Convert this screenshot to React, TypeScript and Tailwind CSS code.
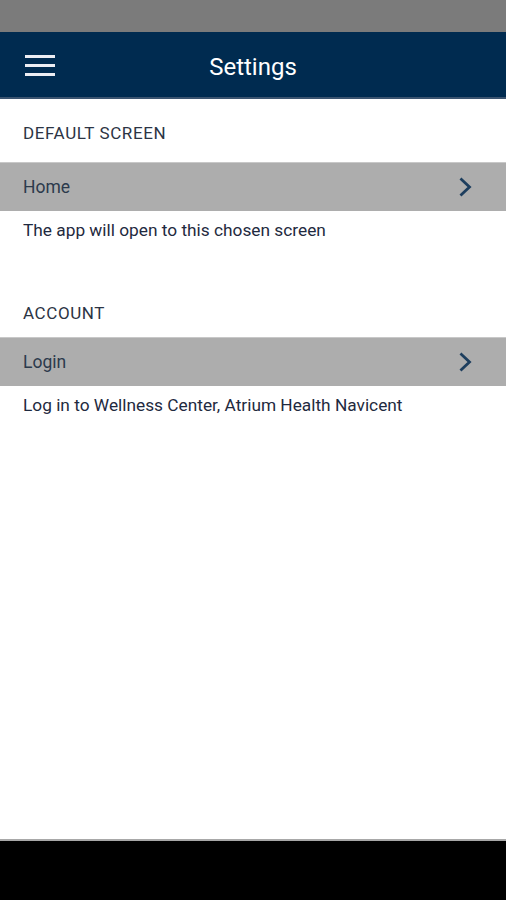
import React from "react";

function Chevron() {
  return (
    <svg width="16" height="20" viewBox="0 0 16 20" fill="none">
      <path d="M3.5 2.5 L11.5 10 L3.5 17.5" stroke="#1d3e5e" strokeWidth="2.8" strokeLinecap="square" />
    </svg>
  );
}

function Row({ label }: { label: string }) {
  return (
    <div className="h-[49px] bg-[#adadad] border-t border-[#c8c8c8] flex items-center justify-between pl-[23px] pr-[32px]">
      <span className="text-[17.5px] text-[#2c3a4c] leading-[20px]">{label}</span>
      <Chevron />
    </div>
  );
}

export default function App() {
  return (
    <div className="w-[506px] h-[900px] flex flex-col bg-white" style={{ fontFamily: "Roboto, 'Noto Sans', sans-serif" }}>
      <div className="h-[32px] bg-[#7b7b7b] shrink-0" />
      <div className="h-[67px] bg-[#002b50] border-b-2 border-[#3b5470] shrink-0 flex items-center relative">
        <div className="absolute left-[25px] top-[23px] flex flex-col gap-[6px]">
          <div className="w-[30px] h-[3px] bg-[#eceef4]" />
          <div className="w-[30px] h-[3px] bg-[#eceef4]" />
          <div className="w-[30px] h-[3px] bg-[#eceef4]" />
        </div>
        <div className="flex-1 text-center text-white text-[24px] leading-[28px] pt-[4px]">Settings</div>
      </div>
      <div className="flex-1 flex flex-col">
        <div className="pt-[24px] pb-[19px] pl-[23px] text-[17px] tracking-[0.6px] leading-[20px] text-[#2c3444]">DEFAULT SCREEN</div>
        <Row label="Home" />
        <div className="pt-[9px] pl-[23px] text-[17.3px] leading-[20px] text-[#1f2a40]">The app will open to this chosen screen</div>
        <div className="pt-[63px] pb-[14px] pl-[23px] text-[17px] tracking-[0.6px] leading-[20px] text-[#2c3444]">ACCOUNT</div>
        <Row label="Login" />
        <div className="pt-[9px] pl-[23px] text-[17.3px] leading-[20px] text-[#1f2a40]">Log in to Wellness Center, Atrium Health Navicent</div>
      </div>
      <div className="h-[61px] bg-black border-t-2 border-[#a8a8a8] shrink-0" />
    </div>
  );
}
